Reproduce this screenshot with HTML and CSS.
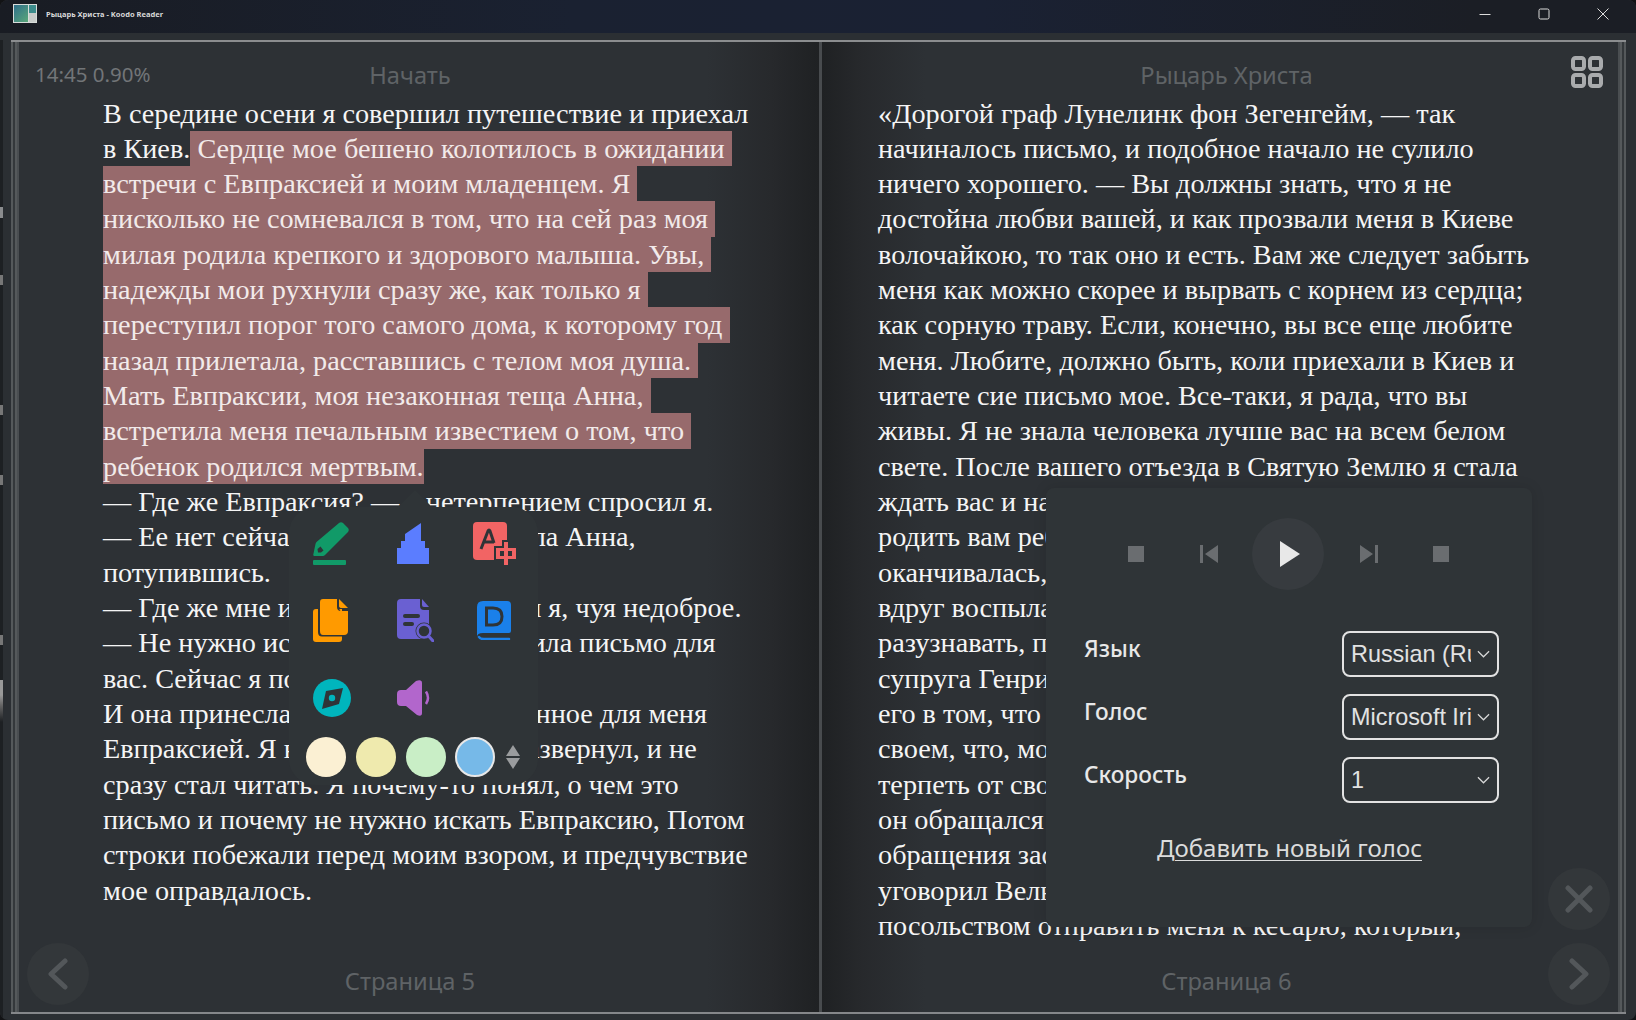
FILE: index.html
```html
<!DOCTYPE html>
<html lang="ru">
<head>
<meta charset="utf-8">
<title>Рыцарь Христа - Koodo Reader</title>
<link rel="stylesheet" href="styles.css">
</head>
<body>
<div class="window">
  <div class="edge"></div>
  <header class="titlebar">
    <div class="app-icon"><span class="app-art"></span><span class="app-side"></span></div>
    <span class="app-title">Рыцарь Христа - Koodo Reader</span>
    <div class="win-controls">
      <svg width="12" height="12" viewBox="0 0 12 12"><path d="M0.5 6.5H11.5" class="win-stroke"/></svg>
      <svg width="12" height="12" viewBox="0 0 12 12"><rect x="1" y="1" width="10" height="10" rx="1.5" class="win-stroke"/></svg>
      <svg width="12" height="12" viewBox="0 0 12 12"><path d="M0.5 0.5L11.5 11.5M11.5 0.5L0.5 11.5" class="win-stroke"/></svg>
    </div>
  </header>
  <div class="strip"></div>
  <main class="frame">
    <section class="page page-left">
      <div class="page-head">
        <span class="status">14:45 0.90%</span>
        <span class="page-title">Начать</span>
        <span class="head-side"></span>
      </div>
      <div class="page-text">
        <div>В середине осени я совершил путешествие и приехал</div>
        <div>в Киев.<span class="hl"> Сердце мое бешено колотилось в ожидании </span></div>
        <div><span class="hl">встречи с Евпраксией и моим младенцем. Я </span></div>
        <div><span class="hl">нисколько не сомневался в том, что на сей раз моя </span></div>
        <div><span class="hl">милая родила крепкого и здорового малыша. Увы, </span></div>
        <div><span class="hl">надежды мои рухнули сразу же, как только я </span></div>
        <div><span class="hl">переступил порог того самого дома, к которому год </span></div>
        <div><span class="hl">назад прилетала, расставшись с телом моя душа. </span></div>
        <div><span class="hl">Мать Евпраксии, моя незаконная теща Анна, </span></div>
        <div><span class="hl">встретила меня печальным известием о том, что </span></div>
        <div><span class="hl">ребенок родился мертвым.</span></div>
        <div>— Где же Евпраксия? — с нетерпением спросил я.</div>
        <div>— Ее нет сейчас дома, — мне сказала Анна,</div>
        <div>потупившись.</div>
        <div>— Где же мне искать ее? — спросил я, чуя недоброе.</div>
        <div>— Не нужно искать ее. Она и оставила письмо для</div>
        <div>вас. Сейчас я покажу его.</div>
        <div>И она принесла мне письмо, написанное для меня</div>
        <div>Евпраксией. Я взял письмо и сел, развернул, и не</div>
        <div>сразу стал читать. Я почему-то понял, о чем это</div>
        <div>письмо и почему не нужно искать Евпраксию, Потом</div>
        <div>строки побежали перед моим взором, и предчувствие</div>
        <div>мое оправдалось.</div>
      </div>
      <div class="page-foot">Страница 5</div>
    </section>
    <div class="spine"></div>
    <section class="page page-right">
      <div class="page-head">
        <span class="head-side"></span>
        <span class="page-title">Рыцарь Христа</span>
        <span class="head-side head-end">
          <svg width="32" height="32" viewBox="0 0 32 32" class="grid-icon">
            <rect x="2" y="2" width="11" height="11" rx="2.5"/>
            <rect x="19" y="2" width="11" height="11" rx="2.5"/>
            <rect x="2" y="19" width="11" height="11" rx="2.5"/>
            <rect x="19" y="19" width="11" height="11" rx="2.5"/>
          </svg>
        </span>
      </div>
      <div class="page-text">
        <div>«Дорогой граф Лунелинк фон Зегенгейм, — так</div>
        <div>начиналось письмо, и подобное начало не сулило</div>
        <div>ничего хорошего. — Вы должны знать, что я не</div>
        <div>достойна любви вашей, и как прозвали меня в Киеве</div>
        <div>волочайкою, то так оно и есть. Вам же следует забыть</div>
        <div>меня как можно скорее и вырвать с корнем из сердца;</div>
        <div>как сорную траву. Если, конечно, вы все еще любите</div>
        <div>меня. Любите, должно быть, коли приехали в Киев и</div>
        <div>читаете сие письмо мое. Все-таки, я рада, что вы</div>
        <div>живы. Я не знала человека лучше вас на всем белом</div>
        <div>свете. После вашего отъезда в Святую Землю я стала</div>
        <div>ждать вас и надеяться на скорую встречу</div>
        <div>родить вам ребенка, но беременность моя</div>
        <div>оканчивалась, как вы уже знаете, бедой</div>
        <div>вдруг воспылал ко мне страстью император</div>
        <div>разузнавать, последние вести о нем</div>
        <div>супруга Генриха, и узнала его волю</div>
        <div>его в том, что он поступает дурно</div>
        <div>своем, что, может быть, я не смогу</div>
        <div>терпеть от своего мужа такое</div>
        <div>он обращался ко мне за помощью</div>
        <div>обращения заставили меня уехать</div>
        <div>уговорил Вельфа принять мою сторону</div>
        <div>посольством отправить меня к кесарю, который,</div>
      </div>
      <div class="page-foot">Страница 6</div>
    </section>
  </main>

  <div class="round-btn btn-prev">
    <svg width="24" height="32" viewBox="0 0 24 32"><path d="M19 3L5 16L19 29" class="nav-stroke"/></svg>
  </div>
  <div class="round-btn btn-close">
    <svg width="28" height="28" viewBox="0 0 28 28"><path d="M3 3L25 25M25 3L3 25" class="nav-stroke"/></svg>
  </div>
  <div class="round-btn btn-next">
    <svg width="24" height="32" viewBox="0 0 24 32"><path d="M5 3L19 16L5 29" class="nav-stroke"/></svg>
  </div>

  <aside class="popup">
    <span class="popup-arrow"></span>
    <div class="tools">
      <svg class="tool" width="36" height="43" viewBox="0 0 36 43"><path d="M26 1Q28 -0.500 30 1L35 6Q36.500 8 35 10L12 33Q11 34 10 34H1.500Q0 34 0.300 32.500L2.500 22Q2.700 21 3.500 20Z" fill="#119a68"/><path d="M4.500 27L7.500 24.500L10.500 28.500L8 30.500L5 30.500Z" fill="#2f3437"/><rect y="38" width="33" height="5" rx="1" fill="#119a68"/></svg>
      <svg class="tool" width="32" height="41" viewBox="0 0 32 41"><path d="M24 0V18H28V25H32V41H0V25H4V18H8V11Z" fill="#5b7dff"/></svg>
      <svg class="tool" width="43" height="43" viewBox="0 0 43 43"><rect width="34" height="38" rx="4" fill="#f26464"/><path d="M8 27L15 9Q16 7 17 9L21 21M11 20H21" fill="none" stroke="#2f3437" stroke-width="3"/><path d="M29 18H37V24H45V39H37V45H29V39H21V24H29Z" fill="#2f3437"/><path d="M31 20H35V26H43V37H35V43H31V37H23V26H31Z" fill="#f26464"/><path d="M27 29H31V34H27ZM35 29H39V34H35Z" fill="#2f3437"/></svg>
      <svg class="tool" width="35" height="43" viewBox="0 0 35 43"><path d="M3 10H29V40Q29 43 26 43H3Q0 43 0 40V13Q0 10 3 10Z" fill="#ff9a00"/><path d="M10 -1H26V8Q26 13 31 13H36V33Q36 37.500 32 37.500H9Q5 37.500 5 33V3Q5 -1 10 -1Z" fill="#2f3437"/><path d="M10 0H24V8Q24 12 28 12H35V32Q35 36 31 36H10Q7 36 7 32V3Q7 0 10 0Z" fill="#ff9a00"/><path d="M26 0L35 9H29Q26 9 26 7Z" fill="#ff9a00"/></svg>
      <svg class="tool" width="37" height="43" viewBox="0 0 37 43"><path d="M4 0H23V7Q23 11 27 11H32V36Q32 40 28 40H4Q0 40 0 36V4Q0 0 4 0Z" fill="#6a60d2"/><path d="M25 0L32 8H27Q25 8 25 6Z" fill="#6a60d2"/><rect x="6" y="15" width="17" height="4" rx="2" fill="#2f3437"/><rect x="6" y="23" width="11" height="4" rx="2" fill="#2f3437"/><circle cx="27" cy="32" r="8.500" fill="#2f3437"/><circle cx="27" cy="32" r="6.500" fill="#2f3437" stroke="#6a60d2" stroke-width="2.500"/><path d="M31.500 37L36 42" stroke="#6a60d2" stroke-width="3" stroke-linecap="round"/></svg>
      <svg class="tool tool-dict" width="34" height="39" viewBox="0 0 34 39"><path d="M6 0H30Q34 0 34 4V30Q34 32 32 32H6Q0 32 0 36V6Q0 0 6 0Z" fill="#1a80ea"/><path d="M2 36Q3 38 7 38H32" fill="none" stroke="#1a80ea" stroke-width="2.500" stroke-linecap="round"/><path d="M9.500 7H16Q25 7 25 15.500Q25 24 16 24H9.500Z" fill="none" stroke="#2f3437" stroke-width="3"/></svg>
      <svg class="tool" width="38" height="38" viewBox="-19 -19 38 38"><circle r="19" fill="#00b5bd"/><path d="M11 -10L7 6L-10 11L-6 -7Z" fill="#2f3437"/><circle r="3.200" fill="#00b5bd"/></svg>
      <svg class="tool" width="34" height="36" viewBox="0 0 34 36"><path d="M19 1Q25 -1 25 3V33Q25 37 20 35L9 26H4Q0 26 0 22V14Q0 10 4 10H9Z" fill="#b266cc"/><path d="M29 11.500Q33 18 29 24" fill="none" stroke="#b266cc" stroke-width="2.500"/></svg>
    </div>
    <div class="swatches">
      <span class="swatch sw-cream"></span>
      <span class="swatch sw-yellow"></span>
      <span class="swatch sw-green"></span>
      <span class="swatch sw-blue"></span>
      <span class="sorter"><span class="tri-up"></span><span class="tri-down"></span></span>
    </div>
  </aside>

  <aside class="panel">
    <div class="player">
      <svg width="16" height="16" viewBox="0 0 16 16"><rect width="16" height="16" fill="#6a6d70"/></svg>
      <svg width="18" height="18" viewBox="0 0 18 18"><path d="M0 0H3V18H0ZM18 0V18L5 9Z" fill="#6a6d70"/></svg>
      <span class="play"><svg width="20" height="26" viewBox="0 0 20 26"><path d="M0 0L20 13L0 26Z" fill="#e8e8e8"/></svg></span>
      <svg width="18" height="18" viewBox="0 0 18 18"><path d="M18 0H15V18H18ZM0 0V18L13 9Z" fill="#6a6d70"/></svg>
      <svg width="16" height="16" viewBox="0 0 16 16"><rect width="16" height="16" fill="#6a6d70"/></svg>
    </div>
    <div class="field">
      <span class="field-label">Язык</span>
      <div class="select"><span class="select-value">Russian (Russia)</span><svg width="14" height="8" viewBox="0 0 14 8"><path d="M1 1L7 7L13 1" class="chev"/></svg></div>
    </div>
    <div class="field">
      <span class="field-label">Голос</span>
      <div class="select"><span class="select-value">Microsoft Irina</span><svg width="14" height="8" viewBox="0 0 14 8"><path d="M1 1L7 7L13 1" class="chev"/></svg></div>
    </div>
    <div class="field">
      <span class="field-label">Скорость</span>
      <div class="select"><span class="select-value">1</span><svg width="14" height="8" viewBox="0 0 14 8"><path d="M1 1L7 7L13 1" class="chev"/></svg></div>
    </div>
    <a class="add-voice">Добавить новый голос</a>
  </aside>
</div>
</body>
</html>
```

FILE: styles.css
```css
* { box-sizing: border-box; }
html, body { margin: 0; padding: 0; background: #121315; }
body { width: 1636px; height: 1020px; overflow: hidden; }
.window {
  position: relative;
  width: 1636px;
  height: 1020px;
  display: flex;
  flex-direction: column;
  background: #2b2f33;
  border-radius: 8px;
  overflow: hidden;
  font-family: "Noto Sans", "Open Sans", sans-serif;
}
.edge {
  position: absolute;
  left: 0;
  top: 40px;
  width: 3px;
  height: 980px;
  background:
    linear-gradient(#1d2023 167px, #8a8c8e 167px, #8a8c8e 178px, #1d2023 178px, #1d2023 235px, #777 235px, #777 245px, #1d2023 245px, #1d2023 365px, #777 365px, #777 375px, #1d2023 375px, #1d2023 435px, #777 435px, #777 445px, #1d2023 445px, #1d2023 595px, #777 595px, #777 605px, #1d2023 605px, #1d2023 640px, #999 640px, #999 655px, #666 665px, #1d2023 682px);
}
.titlebar {
  height: 33px;
  flex: none;
  display: flex;
  align-items: center;
  padding: 0 0 6px 13px;
  background: linear-gradient(90deg, #191c23 0, #1a2131 35%, #1a2133 60%, #1b1e25 90%);
}
.app-icon {
  width: 24px;
  height: 19px;
  display: flex;
  gap: 1px;
  padding: 1px;
  background: #d8dcda;
}
.app-art { flex: 1; background: linear-gradient(135deg, #2f6f8a, #5aa77a); }
.app-side { width: 7px; background: linear-gradient(#3c8c8c 50%, #c8ccca 50%); }
.app-title {
  margin-left: 9px;
  font-size: 7.500px;
  font-weight: 700;
  color: #d8d8d8;
}
.win-controls {
  margin-left: auto;
  width: 157px;
  padding: 0 27px 0 0;
  display: flex;
  justify-content: space-between;
  align-items: center;
}
.win-stroke { fill: none; stroke: #dcdcdc; stroke-width: 1; }
.strip { height: 7px; flex: none; background: #2b2f33; }
.frame {
  height: 974px;
  flex: none;
  margin: 0 10px 0 11px;
  padding: 2px 8px;
  display: flex;
  background: #2d3135;
  box-shadow:
    inset 0 2px 0 #8b8d8f,
    inset 0 -2px 0 #85878a,
    inset 2px 0 0 #55595b,
    inset -2px 0 0 #55595b,
    inset 4px 0 0 #34383b,
    inset -4px 0 0 #34383b,
    inset 6px 0 0 #55595b,
    inset -6px 0 0 #55595b,
    inset 8px 0 0 #4a4e51,
    inset -8px 0 0 #4a4e51;
}
.page {
  display: flex;
  flex-direction: column;
  height: 970px;
}
.page-left {
  width: 800px;
  padding-right: 18px;
  background: linear-gradient(90deg, #2d3135 0, #2d3135 86%, #27292c 94%, #1f2123 100%);
}
.page-right {
  width: 796px;
  padding-left: 13px;
  background: linear-gradient(90deg, #1f2123 0, #27292c 5%, #2d3135 13%, #2d3135 100%);
}
.spine { width: 3px; flex: none; background: #484b4e; }
.page-head {
  height: 53.500px;
  flex: none;
  padding-top: 12px;
  display: grid;
  grid-template-columns: 1fr auto 1fr;
  align-items: center;
}
.status {
  padding-left: 16px;
  margin-top: -2px;
  font-size: 20.500px;
  color: #727578;
  white-space: nowrap;
}
.page-title { font-size: 23.700px; color: #5f6366; }
.head-end { display: flex; justify-content: flex-end; padding-right: 15px; }
.grid-icon { margin-top: -6px; }
.grid-icon rect { fill: none; stroke: #a9abad; stroke-width: 4; }
.page-text {
  flex: 1;
  font-family: "Liberation Serif", "Times New Roman", serif;
  font-size: 28.250px;
  line-height: 35.330px;
  color: #f5f5f5;
  overflow: hidden;
}
.page-text div { white-space: pre; height: 35.330px; }
.page-left .page-text { padding-left: 84px; }
.page-right .page-text { padding-left: 43px; }
.hl {
  display: inline-block;
  vertical-align: top;
  background: #976a6c;
  color: #f2eaea;
}
.page-foot {
  height: 60px;
  flex: none;
  padding-bottom: 2px;
  display: flex;
  align-items: center;
  justify-content: center;
  font-size: 23.700px;
  color: #5f6366;
}
.round-btn {
  position: absolute;
  width: 62px;
  height: 62px;
  border-radius: 50%;
  background: #33373a;
  display: flex;
  align-items: center;
  justify-content: center;
}
.btn-prev { left: 27px; top: 943px; }
.btn-close { left: 1548px; top: 868px; }
.btn-next { left: 1548px; top: 943px; }
.nav-stroke { fill: none; stroke: #53575a; stroke-width: 5; stroke-linecap: round; stroke-linejoin: round; }

.popup {
  position: absolute;
  left: 289px;
  top: 507px;
  width: 249px;
  height: 278px;
  padding: 0 0 0 24px;
  background: #2f3437;
  border-radius: 26px;
}
.popup-arrow {
  position: absolute;
  left: 108px;
  top: -17px;
  border-left: 18px solid transparent;
  border-right: 18px solid transparent;
  border-bottom: 18px solid #2f3437;
}
.tools {
  margin-top: -2px;
  display: grid;
  grid-template-columns: 84px 76px auto;
  grid-auto-rows: 77px;
  align-items: center;
  justify-items: start;
}
.tool-dict { margin-left: 4px; }
.swatches {
  position: absolute;
  left: 17px;
  top: 230px;
  display: flex;
  align-items: center;
  gap: 10px;
}
.swatch { width: 40px; height: 40px; border-radius: 50%; }
.sw-cream { background: #fbf0d3; }
.sw-yellow { background: #efeaae; }
.sw-green { background: #c9eec6; }
.sw-blue { background: #76b9e8; border: 2px solid #e8e8e8; margin-left: -1px; }
.sorter { display: flex; flex-direction: column; gap: 2px; margin-left: 1px; }
.tri-up, .tri-down { width: 0; height: 0; border-left: 7px solid transparent; border-right: 7px solid transparent; }
.tri-up { border-bottom: 11px solid #9a9c9e; }
.tri-down { border-top: 11px solid #9a9c9e; }

.panel {
  position: absolute;
  left: 1046px;
  top: 488px;
  width: 486px;
  height: 439px;
  padding: 30px 33px 0 38px;
  background: #2f3437;
  border-radius: 8px;
  box-shadow: 0 0 14px rgba(0, 0, 0, 0.12);
}
.player {
  height: 72px;
  margin-bottom: 41px;
  padding-left: 44px;
  display: flex;
  align-items: center;
}
.player > :nth-child(2) { margin-left: 56px; }
.player > :nth-child(3) { margin-left: 34px; }
.player > :nth-child(4) { margin-left: 36px; }
.player > :nth-child(5) { margin-left: 55px; }
.play {
  width: 72px;
  height: 72px;
  border-radius: 50%;
  background: #373b3f;
  display: flex;
  align-items: center;
  justify-content: center;
  padding-left: 4px;
}
.field {
  height: 46px;
  margin-bottom: 17px;
  display: flex;
  align-items: center;
  justify-content: space-between;
}
.field-label {
  font-size: 22.700px;
  font-weight: 500;
  color: #e8e8e8;
  margin-top: -12px;
}
.select {
  width: 157px;
  height: 46px;
  padding: 0 7px;
  border: 2px solid #e2e2e2;
  border-radius: 8px;
  display: flex;
  align-items: center;
  gap: 6px;
  font-family: "Liberation Sans", Arial, sans-serif;
  font-size: 23.400px;
  color: #e2e2e2;
}
.select-value { width: 120px; overflow: hidden; white-space: nowrap; flex: none; }
.chev { fill: none; stroke: #d8d8d8; stroke-width: 1.300; }
.add-voice {
  display: block;
  margin-top: 28px;
  text-align: center;
  font-size: 24px;
  color: #dcdcdc;
  text-decoration: underline;
  text-underline-offset: 3px;
  text-decoration-thickness: 1px;
  padding-right: 4px;
}
```
